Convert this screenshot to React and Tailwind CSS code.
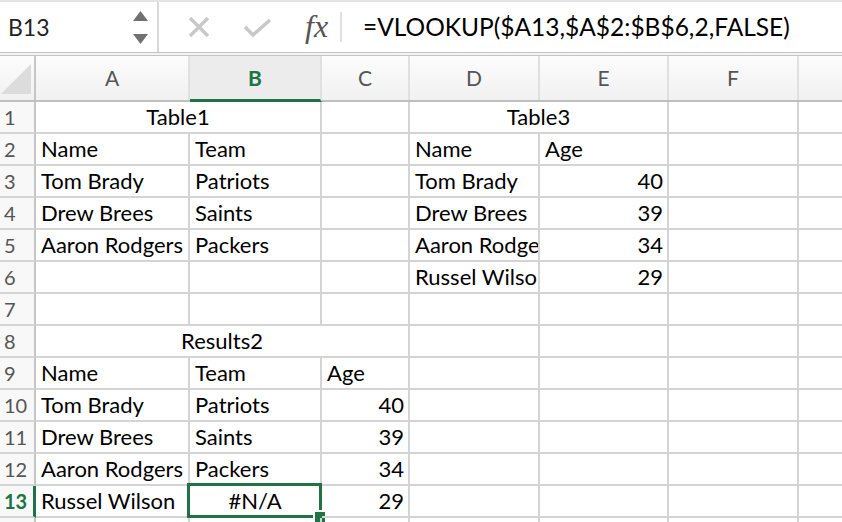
import React from "react";

const GRID = "border-[#d4d4d4]";
const widths = [154, 132, 88, 130, 129, 130, 79];
const letters = ["A", "B", "C", "D", "E", "F", ""];

const rows = [
  { n: 1, cells: [{ t: "Table1", span: 2, align: "center" }, {}, { t: "Table3", span: 2, align: "center" }, {}, {}] },
  { n: 2, cells: [{ t: "Name" }, { t: "Team" }, {}, { t: "Name" }, { t: "Age" }, {}, {}] },
  { n: 3, cells: [{ t: "Tom Brady" }, { t: "Patriots" }, {}, { t: "Tom Brady" }, { t: "40", align: "right" }, {}, {}] },
  { n: 4, cells: [{ t: "Drew Brees" }, { t: "Saints" }, {}, { t: "Drew Brees" }, { t: "39", align: "right" }, {}, {}] },
  { n: 5, cells: [{ t: "Aaron Rodgers" }, { t: "Packers" }, {}, { t: "Aaron Rodgers" }, { t: "34", align: "right" }, {}, {}] },
  { n: 6, cells: [{}, {}, {}, { t: "Russel Wilson" }, { t: "29", align: "right" }, {}, {}] },
  { n: 7, cells: [{}, {}, {}, {}, {}, {}, {}] },
  { n: 8, cells: [{ t: "Results2", span: 3, align: "center" }, {}, {}, {}, {}] },
  { n: 9, cells: [{ t: "Name" }, { t: "Team" }, { t: "Age" }, {}, {}, {}, {}] },
  { n: 10, cells: [{ t: "Tom Brady" }, { t: "Patriots" }, { t: "40", align: "right" }, {}, {}, {}, {}] },
  { n: 11, cells: [{ t: "Drew Brees" }, { t: "Saints" }, { t: "39", align: "right" }, {}, {}, {}, {}] },
  { n: 12, cells: [{ t: "Aaron Rodgers" }, { t: "Packers" }, { t: "34", align: "right" }, {}, {}, {}, {}] },
  { n: 13, cells: [{ t: "Russel Wilson" }, { t: "#N/A", align: "center", sel: true }, { t: "29", align: "right" }, {}, {}, {}, {}] },
  { n: 14, hide: true, cells: [{}, {}, {}, {}, {}, {}, {}] },
];

function Row({ row }) {
  let col = 0;
  const isSel = row.n === 13;
  return (
    <div className="flex h-[32px] shrink-0">
      <div
        className={`w-[36px] shrink-0 flex items-center pl-[4px] bg-[#f8f8f8] border-b-2 border-[#d4d4d4] ${
          isSel ? "border-r-[3px] border-r-[#217346] text-[#217346] font-bold" : "border-r-2 border-r-[#c6c6c6] text-[#555]"
        } text-[20px] leading-none`}
      >
        {row.hide ? "" : row.n}
      </div>
      {row.cells.map((c, i) => {
        const span = c.span || 1;
        let w = 0;
        for (let k = 0; k < span; k++) w += widths[col + k] || 0;
        col += span;
        if (col > widths.length) return null;
        const align =
          c.align === "right" ? "justify-end pr-[4px]" : c.align === "center" ? "justify-center" : "justify-start pl-[5px]";
        return (
          <div
            key={i}
            style={{ width: w }}
            className={`relative shrink-0 flex items-center whitespace-nowrap border-r-2 border-b-2 ${GRID} ${align} text-[22px] leading-none text-black ${
              c.sel ? "" : "overflow-hidden"
            }`}
          >
            {c.t}
            {c.sel && (
              <>
                <div className="absolute left-[-3px] top-[-3px] right-[-2px] bottom-[-2px] border-[3px] border-[#217346]" />
                <div className="absolute right-[-5px] bottom-[-6px] w-[10px] h-[10px] bg-[#217346] border-t-2 border-l-2 border-white box-content" />
              </>
            )}
          </div>
        );
      })}
    </div>
  );
}

export default function App() {
  return (
    <div
      className="w-[842px] h-[522px] overflow-hidden bg-white flex flex-col"
      style={{ fontFamily: "Lato, 'Liberation Sans', sans-serif" }}
    >
      {/* formula bar */}
      <div className="h-[52px] shrink-0 flex border-t-2 border-[#e4e4e4]">
        <div className="w-[157px] shrink-0 flex items-center justify-between pl-[8px] pr-[9px]">
          <span className="text-[23px] text-[#222] leading-none">B13</span>
          <div className="flex flex-col gap-[13px] items-center">
            <svg width="15" height="10" viewBox="0 0 15 10"><path d="M7.5 0 L15 10 L0 10 Z" fill="#707070" /></svg>
            <svg width="15" height="10" viewBox="0 0 15 10"><path d="M0 0 L15 0 L7.5 10 Z" fill="#707070" /></svg>
          </div>
        </div>
        <div className="w-[2px] bg-[#d8d8d8]" />
        <div className="flex items-center flex-1">
          <div className="ml-[29px] w-[22px] flex justify-center">
            <svg width="22" height="20" viewBox="0 0 22 20"><path d="M2 1 L20 19 M20 1 L2 19" stroke="#c8c8c8" strokeWidth="3.4" /></svg>
          </div>
          <div className="ml-[33px] w-[29px] flex justify-center">
            <svg width="29" height="19" viewBox="0 0 29 19"><path d="M2 9 L10 17 L27 2" stroke="#c8c8c8" strokeWidth="3.4" fill="none" /></svg>
          </div>
          <span
            className="ml-[33px] w-[34px] text-[32px] italic text-[#555] leading-none mb-[3px]"
            style={{ fontFamily: "'Liberation Serif', serif" }}
          >
            fx
          </span>
          <div className="ml-[1px] w-[2px] h-[30px] bg-[#e0e0e0]" />
          <span className="ml-[21px] text-[24.5px] text-black leading-none">=VLOOKUP($A13,$A$2:$B$6,2,FALSE)</span>
        </div>
      </div>
      <div className="h-[4px] shrink-0 border-t border-b border-[#c4c4c4] bg-[#f4f4f4]" />
      {/* column headers */}
      <div className="h-[46px] shrink-0 flex border-b-2 border-[#bfbfbf] bg-gradient-to-b from-[#fcfcfc] to-[#f1f1f1]">
        <div className="w-[36px] shrink-0 border-r-2 border-[#c6c6c6] relative">
          <svg className="absolute left-[1px] top-[8px]" width="30" height="30" viewBox="0 0 30 30">
            <path d="M30 0 L30 30 L0 30 Z" fill="#dcdcdc" />
          </svg>
        </div>
        {letters.map((l, i) => (
          <div
            key={i}
            style={{ width: widths[i] }}
            className={`shrink-0 flex items-center justify-center text-[21px] border-r-2 border-[#e0e0e0] ${
              l === "B" ? "bg-[#ececec] text-[#217346] font-bold border-b-[3px] border-b-[#217346] mb-[-2px]" : "text-[#555]"
            }`}
          >
            {l}
          </div>
        ))}
      </div>
      {rows.map((r) => (
        <Row key={r.n} row={r} />
      ))}
    </div>
  );
}
